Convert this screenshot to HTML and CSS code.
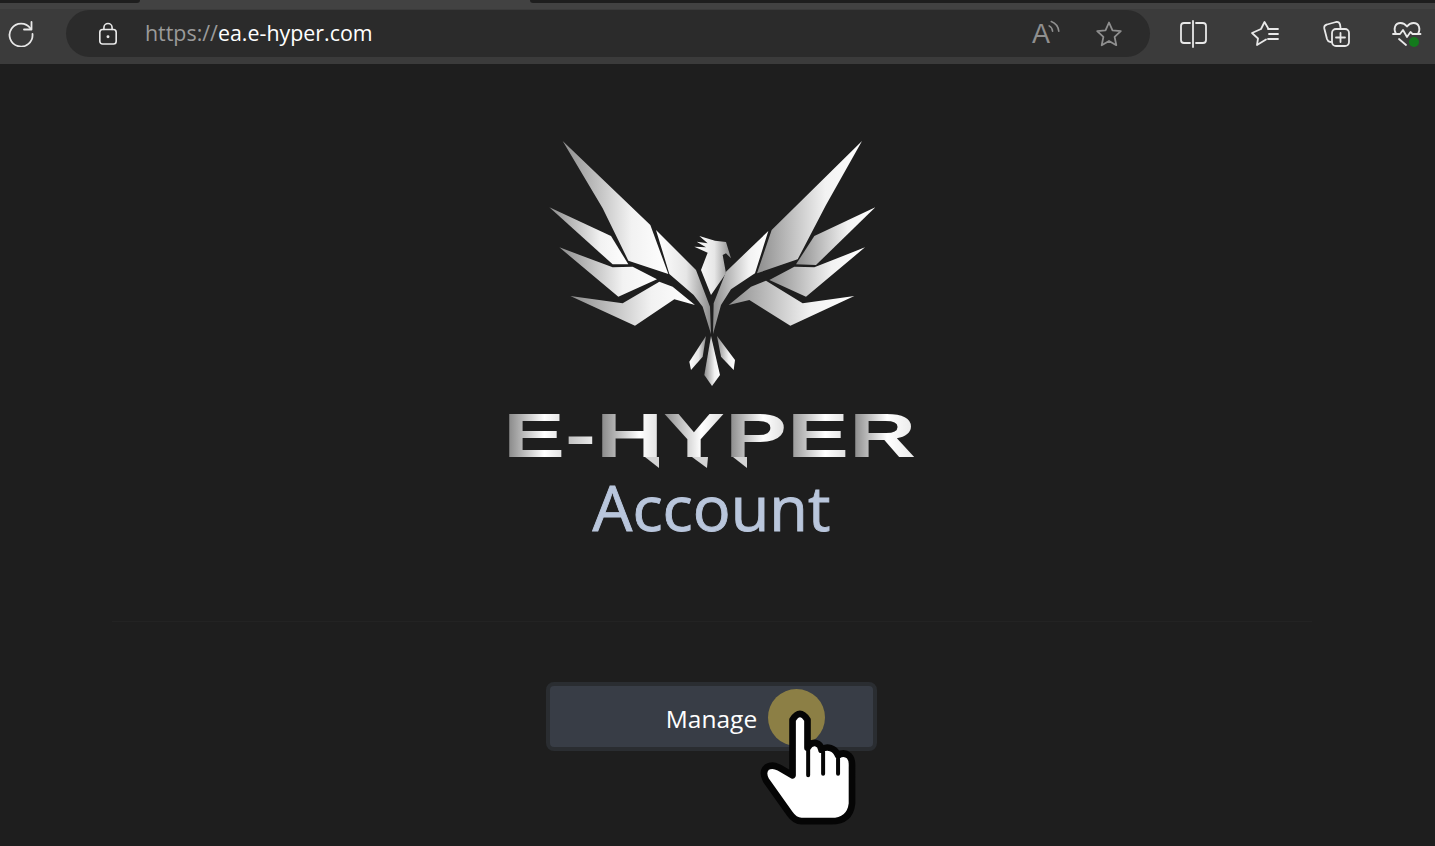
FILE: index.html
```html
<!DOCTYPE html>
<html lang="en">
<head>
    <meta charset="UTF-8">
    <meta name="viewport" content="width=device-width, initial-scale=1.0">
    <title>E-Hyper Account</title>
    <link rel="stylesheet" href="styles.css">
</head>
<body>
    <header class="browser">
        <div class="tabstrip">
            <div class="tab-edge tab-first"></div>
            <div class="tab-edge tab-second"></div>
        </div>
        <div class="toolbar">
            <svg class="reload" viewBox="0 0 28 28">
                <path d="M23.5 9.5A11.5 11.5 0 1 0 25.5 15"/>
                <path d="M24.5 3v7.5H17"/>
            </svg>
            <div class="address">
                <svg class="lock" viewBox="0 0 22 26">
                    <rect x="2" y="8" width="18" height="16" rx="3"/>
                    <path d="M6.5 8V6a4.5 4.5 0 0 1 9 0v2"/>
                    <circle class="solid" cx="11" cy="16" r="1.6"/>
                </svg>
                <div class="url"><span class="scheme">https://</span>ea.e-hyper.com</div>
                <div class="address-actions">
                    <div class="read-aloud">
                        <span class="read-letter">A</span>
                        <svg viewBox="0 0 12 14">
                            <path d="M1 5.500c2 1 3 2.500 3.200 5"/>
                            <path d="M3 1.500c4 1.500 6.500 4.500 7 9"/>
                        </svg>
                    </div>
                    <svg class="star" viewBox="0 0 28 28">
                        <path d="M14 2.500l3.500 7.800 8.300.9-6.200 5.700 1.700 8.300-7.300-4.200-7.300 4.200 1.700-8.300-6.200-5.700 8.300-.9z"/>
                    </svg>
                </div>
            </div>
            <div class="tools">
                <svg class="tool" viewBox="0 0 30 30">
                    <path d="M12 4H6a3 3 0 0 0-3 3v14a3 3 0 0 0 3 3h6"/>
                    <path d="M18 4h7a3 3 0 0 1 3 3v14a3 3 0 0 1-3 3h-7"/>
                    <path d="M15 2v26"/>
                </svg>
                <svg class="tool" viewBox="0 0 30 30">
                    <path d="M18 9l-3.500-6L11 10l-9 4 6 5.500L7 26l9-5.500"/>
                    <path d="M18 10h10M19 15h9M18 20h10"/>
                </svg>
                <svg class="tool" viewBox="0 0 30 30">
                    <path d="M9 23l-1-.2a4 4 0 0 1-3-2.800L2.300 9.500A3.500 3.500 0 0 1 5 5.500l9-2.500a3.500 3.500 0 0 1 4 2.500l.5 3"/>
                    <rect x="10" y="10" width="17" height="17" rx="4"/>
                    <path d="M18.500 14v9M14 18.500h9"/>
                </svg>
                <div class="tool health">
                    <svg viewBox="0 0 30 30">
                        <path d="M4 15C1 10 3 4 8.500 4c3 0 5 1.500 6.500 3.500C16.500 5.500 18.500 4 21.500 4 27 4 29 10 26 15"/>
                        <path d="M1 15h7l3-4 4 7 3.500-5 2 2h8"/>
                        <path d="M7 20l7 6"/>
                    </svg>
                    <span class="health-dot"></span>
                </div>
            </div>
        </div>
    </header>

    <main class="page">
        <svg class="eagle" viewBox="0 0 1080 795">
            <defs>
                <linearGradient id="silver">
                    <stop offset="0" stop-color="#8d8d8d"/>
                    <stop offset="0.65" stop-color="#f2f2f2"/>
                    <stop offset="1" stop-color="#ffffff"/>
                </linearGradient>
                <linearGradient id="silver-rev">
                    <stop offset="0" stop-color="#ffffff"/>
                    <stop offset="0.55" stop-color="#e6e6e6"/>
                    <stop offset="1" stop-color="#8a8a8a"/>
                </linearGradient>
            </defs>
            <g fill="url(#silver)">
                <polygon points="95,33 358,285 412,432 292,392 215,235"/>
                <polygon points="55,232 240,318 292,403 245,403"/>
                <polygon points="85,352 245,412 305,410 378,448 262,500"/>
                <polygon points="118,498 275,520 385,455 425,470 492,525 430,508 312,587"/>
                <polygon points="722,300 678,430 800,388 885,225 993,33"/>
                <polygon points="850,318 795,403 855,405 1033,232"/>
                <polygon points="715,450 825,500 1002,352 850,412 790,410"/>
                <polygon points="705,452 660,470 593,525 655,510 778,587 970,498 815,520"/>
                <polygon points="712,303 585,425 548,520 546,612 570,525 600,478 672,430"/>
                <polygon points="558,618 612,690 608,720 570,680"/>
                <polygon points="540,618 567,735 543,768 520,735"/>
            </g>
            <g fill="url(#silver-rev)">
                <polygon points="375,300 495,420 537,530 540,612 515,530 488,495 415,432"/>
                <polygon points="525,618 515,680 480,720 475,695"/>
            </g>
            <polygon fill="url(#silver-rev)" points="505,318 552,332 585,336 600,385 585,370 575,375 585,430 540,495 510,420 530,368 490,350 525,352 497,335 530,340"/>
        </svg>

        <div class="wordmark">
            <span class="wordmark-text">E-HYPER</span>
            <svg class="mark-tails" viewBox="0 0 408 12">
                <polygon points="137,0 151,0 151,11"/>
                <polygon points="184,0 200,0 199,11"/>
                <polygon points="225,0 239,0 239,11"/>
            </svg>
        </div>

        <h1 class="title">Account</h1>

        <div class="divider"></div>

        <button class="manage-btn">
            Manage
            <span class="click-dot"></span>
            <svg class="hand" viewBox="660 110 310 360">
                <path class="hand-shape" d="M773 148Q795 112 818 148L818 232Q828 215 843 218Q858 222 860 238Q872 228 888 233Q904 238 910 255Q928 243 944 257Q953 266 952 290L952 400Q946 453 890 453L800 453Q780 453 764 430L693 330Q680 305 695 291Q712 280 733 292L773 315Z"/>
                <path class="hand-lines" d="M820 235V315M865 245V310M910 265V310"/>
            </svg>
        </button>
    </main>
</body>
</html>
```

FILE: styles.css
```css
html, body {
    height: 100%;
}

body {
    margin: 0;
    overflow: hidden;
    background-color: #1e1e1e;
    color: white;
    font-family: "Open Sans", "Noto Sans", sans-serif;
}

/* Browser chrome */
.browser {
    background-color: #3b3b3b;
    height: 64px;
}

.tabstrip {
    display: flex;
    justify-content: flex-start;
    height: 9px;
    background-color: #424242;
}

.tab-edge {
    height: 3px;
    background-color: #1e1e1e;
}

.tab-first {
    width: 140px;
    border-radius: 0 0 4px 0;
}

.tab-second {
    flex: 1;
    margin-left: 390px;
    border-radius: 0 0 0 4px;
}

.toolbar {
    display: flex;
    align-items: flex-start;
    padding-top: 1px;
}

.toolbar svg {
    fill: none;
    stroke: #e8e8e8;
    stroke-width: 1.8;
    stroke-linecap: round;
    stroke-linejoin: round;
}

.reload {
    width: 28px;
    height: 28px;
    margin: 9px 0 0 7px;
    flex-shrink: 0;
}

.address {
    display: flex;
    align-items: center;
    width: 1084px;
    height: 47px;
    margin-left: 31px;
    padding: 0 27px 0 32px;
    box-sizing: border-box;
    border-radius: 24px;
    background-color: #2b2b2b;
}

.lock {
    width: 20px;
    height: 24px;
    flex-shrink: 0;
}

.toolbar .solid {
    fill: #e8e8e8;
    stroke: none;
}

.url {
    margin: -2px 0 0 27px;
    font-size: 21.4px;
    color: white;
}

.scheme {
    color: #9a9a9a;
}

.address-actions {
    display: flex;
    align-items: center;
    gap: 34px;
    margin-left: auto;
}

.read-aloud {
    display: flex;
    align-items: flex-start;
    color: #8f8f8f;
}

.read-letter {
    font-family: "Liberation Sans", sans-serif;
    font-size: 27px;
    line-height: 28px;
}

.toolbar .read-aloud svg {
    width: 13px;
    height: 15px;
    margin-left: -2px;
    stroke: #8f8f8f;
    stroke-width: 1.5;
}

.toolbar .star {
    width: 28px;
    height: 28px;
    stroke: #8f8f8f;
}

.tools {
    display: flex;
    gap: 42px;
    margin: 9px 0 0 28px;
}

.tool {
    width: 30px;
    height: 30px;
    flex-shrink: 0;
}

.health {
    position: relative;
    margin-left: -2px;
}

.health svg {
    width: 30px;
    height: 30px;
}

.health-dot {
    position: absolute;
    right: 3px;
    bottom: 2px;
    width: 10px;
    height: 10px;
    border-radius: 50%;
    background-color: #137a1c;
}

/* Page */
.page {
    display: flex;
    flex-direction: column;
    align-items: center;
    padding: 66px 12px 0 0;
}

.eagle {
    width: 360px;
    height: 265px;
    margin-right: 2px;
    flex-shrink: 0;
}

.wordmark {
    position: relative;
    width: 408px;
    height: 45px;
    margin-top: 18px;
    font-family: "Liberation Sans", sans-serif;
    font-weight: bold;
    font-size: 63px;
    line-height: 45px;
}

/* one gradient segment per letter, sized on the letter widths */
.wordmark-text {
    display: inline-block;
    font-kerning: none;
    white-space: nowrap;
    transform: translateX(-5px) scaleX(1.475);
    transform-origin: left center;
    background: linear-gradient(90deg,
        #777 0%, #fff 10%, #ddd 15%,
        #bbb 15%, #eee 22.5%,
        #777 22.5%, #fff 33%, #ddd 38.7%,
        #888 38.7%, #fff 48%, #ddd 53.7%,
        #777 53.7%, #fff 63%, #ddd 68.7%,
        #888 68.7%, #fff 78%, #ddd 83.7%,
        #777 83.7%, #fff 93%, #e8e8e8 100%);
    -webkit-background-clip: text;
    background-clip: text;
    color: transparent;
}

.mark-tails {
    position: absolute;
    left: 0;
    top: 44px;
    width: 408px;
    height: 12px;
    fill: #d4d4d4;
}

.title {
    margin: 6px 0 0;
    font-size: 63px;
    font-weight: 400;
    line-height: 86px;
    color: #b9c6dc;
    -webkit-text-stroke: 0.9px #b9c6dc;
}

.divider {
    width: 1200px;
    height: 1px;
    margin-top: 71px;
    background-color: #232323;
}

.manage-btn {
    position: relative;
    width: 331px;
    height: 69px;
    margin-top: 60px;
    padding: 3px 0 0;
    box-sizing: border-box;
    border: 4px solid #2a2d31;
    border-radius: 8px;
    background-color: #383d46;
    color: white;
    font-family: inherit;
    font-size: 24.5px;
}

.click-dot {
    position: absolute;
    left: 218px;
    top: 3px;
    width: 57px;
    height: 57px;
    border-radius: 50%;
    background-color: #8c7f45;
}

.hand {
    position: absolute;
    left: 205px;
    top: 21px;
    width: 103px;
    height: 120px;
}

.hand-shape {
    fill: white;
    stroke: #050505;
    stroke-width: 20;
    stroke-linejoin: round;
}

.hand-lines {
    fill: none;
    stroke: #050505;
    stroke-width: 12;
    stroke-linecap: round;
}
```
